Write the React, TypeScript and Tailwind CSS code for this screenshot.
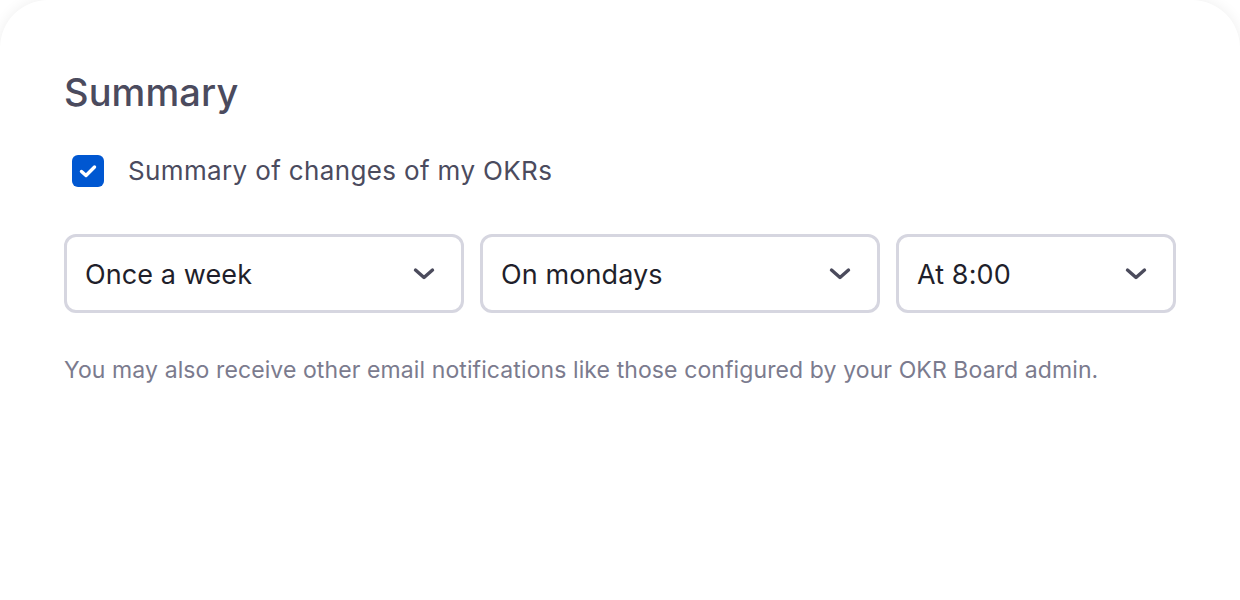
import React from "react";

const Chevron = () => (
  <svg width="22" height="14" viewBox="0 0 22 14" fill="none">
    <path d="M2.5 3 L11 10.5 L19.5 3" stroke="#4b4b5c" strokeWidth="3.4" strokeLinecap="round" strokeLinejoin="round" />
  </svg>
);

const Select = ({ label, w }: { label: string; w: string }) => (
  <div className={`${w} h-[79px] flex items-center justify-between rounded-[12px] border-[3px] border-[#d6d6e0] bg-white pl-[18px] pr-[26px]`}>
    <span className="text-[27px] leading-[32px] tracking-[0.1px] text-[#1f1f2b] translate-y-[1px]">{label}</span>
    <Chevron />
  </div>
);

export default function App() {
  return (
    <div className="w-[1240px] h-[600px] bg-white overflow-hidden" style={{ fontFamily: "Inter, 'Noto Sans', sans-serif" }}>
      <div className="h-[640px] w-[1240px] rounded-t-[48px] bg-white shadow-[0_0_14px_rgba(0,0,0,0.07)] pl-[64px] pt-[68px]">
        <h1 className="text-[38px] font-medium leading-[48px] tracking-[0.1px] text-[#4b4b5e]">Summary</h1>
        <div className="mt-[39px] h-[32px] flex items-center gap-[24px] pl-[8px]">
          <div className="w-[32px] h-[32px] rounded-[6px] bg-[#0057d1] flex items-center justify-center">
            <svg width="20" height="16" viewBox="0 0 20 16" fill="none">
              <path d="M3.5 8.5 L8 12.5 L16.5 4" stroke="white" strokeWidth="3.4" strokeLinecap="round" strokeLinejoin="round" />
            </svg>
          </div>
          <span className="text-[26px] leading-[32px] tracking-[0.36px] text-[#4b4b5e]">Summary of changes of my OKRs</span>
        </div>
        <div className="mt-[47px] flex gap-[16px]">
          <Select label="Once a week" w="w-[400px]" />
          <Select label="On mondays" w="w-[400px]" />
          <Select label="At 8:00" w="w-[280px]" />
        </div>
        <p className="mt-[41px] text-[23px] leading-[32px] tracking-[0.1px] text-[#7b7b8e]">
          You may also receive other email notifications like those configured by your OKR Board admin.
        </p>
      </div>
    </div>
  );
}
